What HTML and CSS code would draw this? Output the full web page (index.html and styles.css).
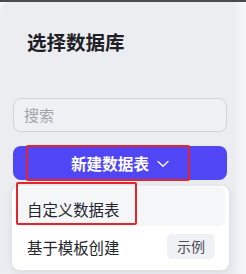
FILE: index.html
```html
<!DOCTYPE html>
<html lang="zh">
<head>
<meta charset="utf-8">
<link rel="stylesheet" href="styles.css">
</head>
<body>
<div class="page">
  <div class="panel">
    <h1 class="title">选择数据库</h1>
    <div class="search">搜索</div>
    <div class="btn-wrap">
      <button class="create-btn">新建数据表
        <svg class="chev" width="12" height="8" viewBox="0 0 12 8"><path d="M1 1.5 L6 6.2 L11 1.5" fill="none" stroke="#fff" stroke-width="1.3" stroke-linecap="round" stroke-linejoin="round"/></svg>
      </button>
      <span class="mark mark-btn"></span>
    </div>
    <div class="menu">
      <div class="item active">自定义数据表<span class="mark mark-item"></span></div>
      <div class="item">基于模板创建<span class="tag">示例</span></div>
    </div>
  </div>
  <div class="edge"></div>
</div>
</body>
</html>
```

FILE: styles.css
```css
html, body {
  margin: 0;
  padding: 0;
  background: #4a4a4c;
  font-family: "Noto Sans CJK SC", "Noto Sans", sans-serif;
}
.page {
  margin-top: 2px;
  height: 272px;
  display: flex;
  background: #f4f5f7;
}
.panel {
  width: 236px;
  box-sizing: border-box;
  background: #ecedf1;
  border-top-left-radius: 10px;
  padding: 28px 9px 0 13px;
  display: flex;
  flex-direction: column;
}
.edge {
  flex: 1;
  background: linear-gradient(90deg, #eef0f3, #f6f7f9);
}
.title {
  margin: 0 0 0 14px;
  font-size: 19.5px;
  line-height: 24px;
  font-weight: 700;
  color: #1e2026;
}
.search {
  margin-top: 44px;
  height: 34px;
  box-sizing: border-box;
  border: 1px solid #cfd2d8;
  border-radius: 8px;
  background: #eef0f3;
  padding-left: 10px;
  font-size: 15px;
  line-height: 32px;
  color: #a2a5ad;
}
.btn-wrap {
  position: relative;
  margin-top: 14px;
}
.create-btn {
  width: 100%;
  height: 34px;
  border: none;
  border-radius: 8px;
  background: #5046f5;
  color: #fff;
  font-family: inherit;
  font-size: 15.6px;
  font-weight: 700;
  display: flex;
  align-items: center;
  justify-content: center;
  gap: 8px;
  padding: 0 0 0 0;
}
.chev { margin-top: 1px; }
.mark {
  position: absolute;
  border: 2px solid #e3262d;
  border-radius: 2px;
  box-sizing: border-box;
  pointer-events: none;
}
.mark-btn {
  left: 13px;
  top: -1px;
  width: 164px;
  height: 36px;
}
.menu {
  margin: 6px -2px 0 -1px;
  background: #fff;
  border-radius: 8px;
  box-shadow: 0 2px 8px rgba(40, 44, 60, 0.10);
  padding: 1px 4px 3px;
}
.item {
  position: relative;
  height: 39px;
  display: flex;
  align-items: center;
  justify-content: space-between;
  padding: 0 10px 0 11px;
  font-size: 15.4px;
  color: #24262c;
  border-radius: 6px;
}
.item.active {
  background: #f5f6f8;
  padding-top: 4px;
  box-sizing: border-box;
}
.item + .item { height: 41px; }
.mark-item {
  left: 0;
  top: -5px;
  width: 121px;
  height: 43px;
}
.tag {
  background: #f0f1f4;
  border-radius: 5px;
  font-size: 14px;
  color: #4a4d55;
  padding: 0 10px;
  line-height: 25px;
}
```
